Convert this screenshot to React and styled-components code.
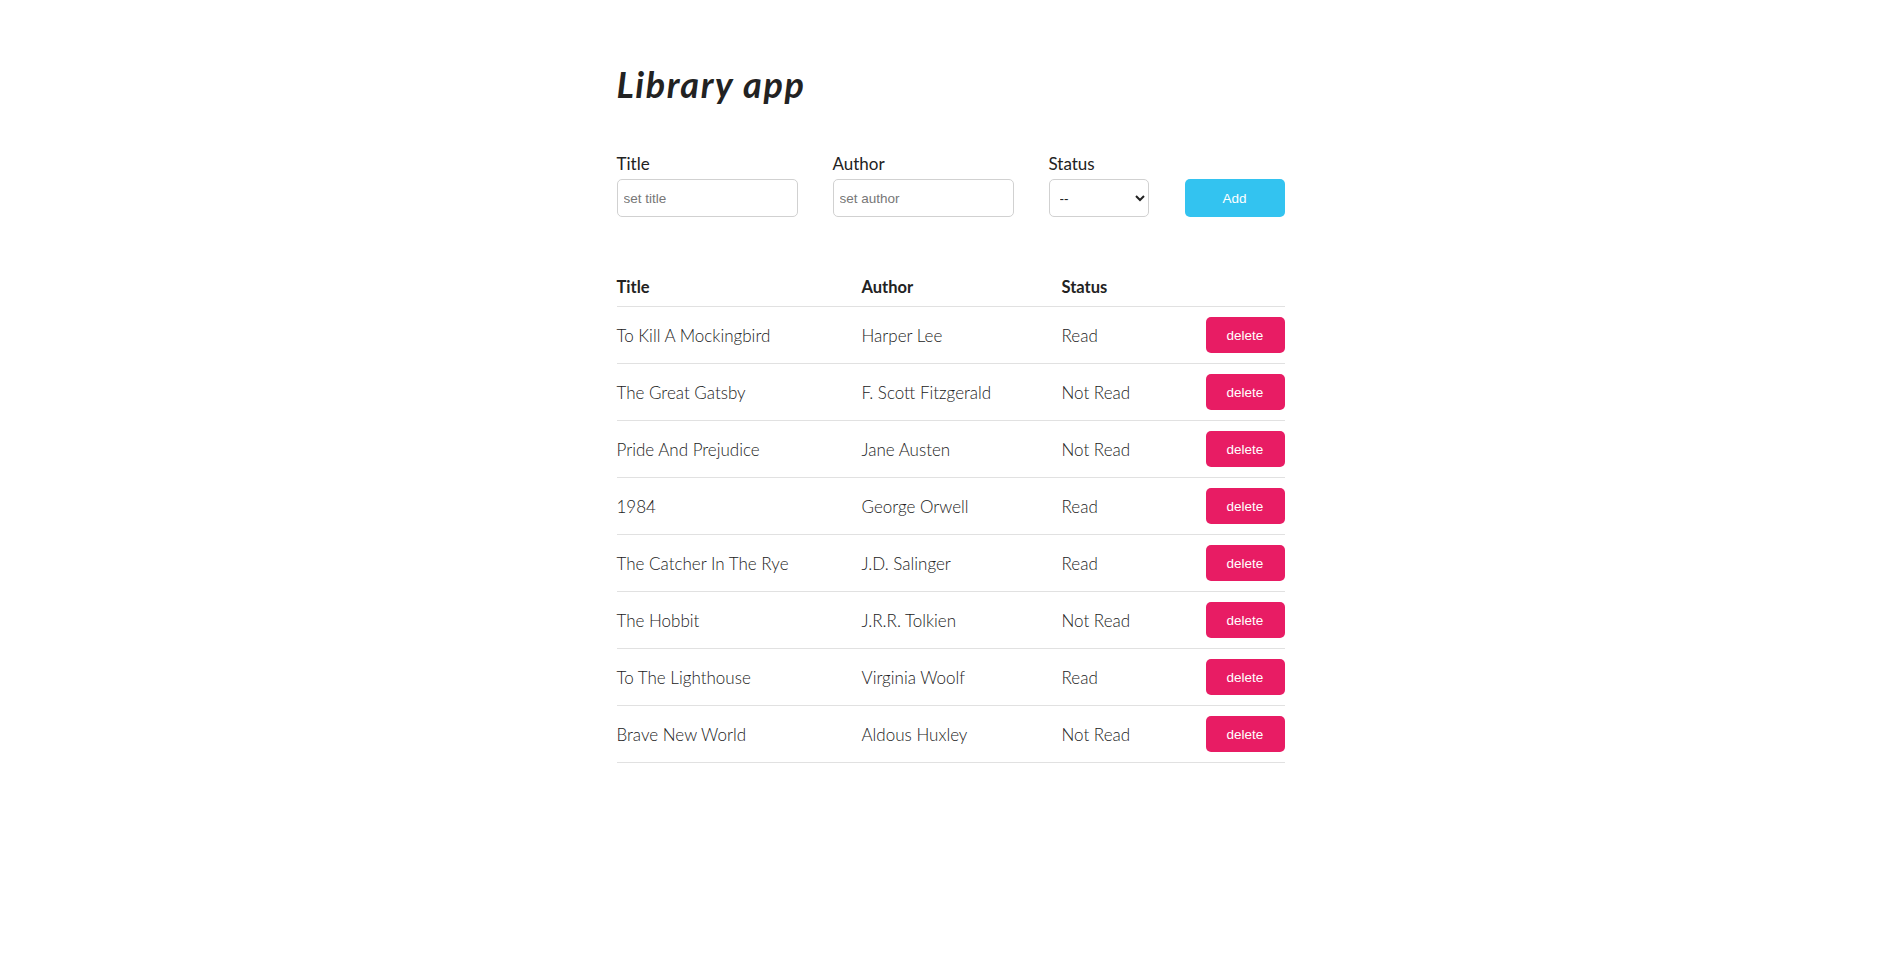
import React from "react";
import styled, { createGlobalStyle } from "styled-components";

const Global = createGlobalStyle`
  html, body { margin: 0; padding: 0; background: #fff; }
  body { font-family: Lato, "Open Sans", sans-serif; color: #222; }
  * { box-sizing: border-box; }
`;

const Page = styled.div`
  width: 668px;
  margin: 0 auto;
  padding-top: 63px;
`;

const Heading = styled.h1`
  margin: 0 0 49px;
  font-size: 36px;
  line-height: 42px;
  font-style: italic;
  font-weight: 700;
  color: #222;
  letter-spacing: 1.6px;
`;

const Form = styled.form`
  display: flex;
  align-items: flex-end;
  margin-bottom: 54px;
`;

const Field = styled.div`
  display: flex;
  flex-direction: column;
  width: ${(p) => p.$w}px;
  margin-right: ${(p) => p.$gap}px;
`;

const Label = styled.label`
  font-size: 17px;
  font-weight: 400;
  line-height: 20px;
  margin-bottom: 5px;
  color: #222;
`;

const Input = styled.input`
  height: 38px;
  width: 100%;
  padding: 6px 6px;
  border: 1px solid #d1d1d1;
  border-radius: 5px;
  font-family: Arial, "Liberation Sans", sans-serif;
  font-size: 13.5px;
  color: #333;
  outline: none;
  &::placeholder { color: #777; }
`;

const Select = styled.select`
  height: 38px;
  width: 100%;
  padding: 6px 6px;
  border: 1px solid #d1d1d1;
  border-radius: 5px;
  background: #fff;
  font-family: Arial, "Liberation Sans", sans-serif;
  font-size: 13.5px;
  color: #222;
`;

const Button = styled.button`
  height: ${(p) => p.$h}px;
  width: ${(p) => p.$w}px;
  border: none;
  border-radius: 5px;
  background: ${(p) => p.$bg};
  color: #fff;
  font-family: Arial, "Liberation Sans", sans-serif;
  font-size: 13.5px;
  cursor: pointer;
  padding: 0;
`;

const Table = styled.div`
  display: flex;
  flex-direction: column;
`;

const Row = styled.div`
  display: grid;
  grid-template-columns: 245px 200px 1fr 79px;
  align-items: ${(p) => (p.$head ? "end" : "center")};
  height: ${(p) => (p.$head ? 36 : 57)}px;
  padding-bottom: ${(p) => (p.$head ? 9 : 0)}px;
  border-bottom: 1px solid #e1e1e1;
`;

const HeadCell = styled.div`
  font-size: 16.5px;
  font-weight: 700;
  color: #222;
  line-height: 20px;
`;

const Cell = styled.div`
  font-size: 17px;
  font-weight: 300;
  color: #222;
  white-space: nowrap;
`;

const books = [
  ["To Kill A Mockingbird", "Harper Lee", "Read"],
  ["The Great Gatsby", "F. Scott Fitzgerald", "Not Read"],
  ["Pride And Prejudice", "Jane Austen", "Not Read"],
  ["1984", "George Orwell", "Read"],
  ["The Catcher In The Rye", "J.D. Salinger", "Read"],
  ["The Hobbit", "J.R.R. Tolkien", "Not Read"],
  ["To The Lighthouse", "Virginia Woolf", "Read"],
  ["Brave New World", "Aldous Huxley", "Not Read"],
];

export default function App() {
  return (
    <>
      <Global />
      <Page>
        <Heading>Library app</Heading>
        <Form onSubmit={(e) => e.preventDefault()}>
          <Field $w={181} $gap={35}>
            <Label>Title</Label>
            <Input placeholder="set title" />
          </Field>
          <Field $w={181} $gap={35}>
            <Label>Author</Label>
            <Input placeholder="set author" />
          </Field>
          <Field $w={100} $gap={36}>
            <Label>Status</Label>
            <Select defaultValue="">
              <option value="">--</option>
              <option value="read">Read</option>
              <option value="not">Not Read</option>
            </Select>
          </Field>
          <Button type="submit" $w={100} $h={38} $bg="#33c3f0">Add</Button>
        </Form>
        <Table>
          <Row $head>
            <HeadCell>Title</HeadCell>
            <HeadCell>Author</HeadCell>
            <HeadCell>Status</HeadCell>
            <HeadCell />
          </Row>
          {books.map(([t, a, s]) => (
            <Row key={t}>
              <Cell>{t}</Cell>
              <Cell>{a}</Cell>
              <Cell>{s}</Cell>
              <Button $w={79} $h={36} $bg="#e81c64">delete</Button>
            </Row>
          ))}
        </Table>
      </Page>
    </>
  );
}
